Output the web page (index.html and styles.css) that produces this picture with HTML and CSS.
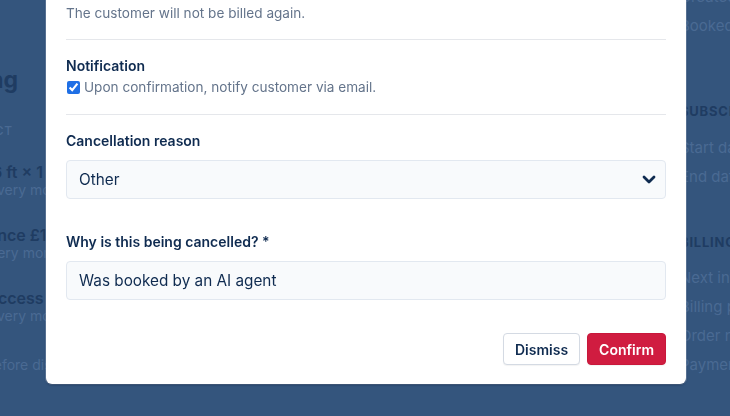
FILE: index.html
```html
<!DOCTYPE html>
<html lang="en">

<head>
    <meta charset="UTF-8">
    <meta name="viewport" content="width=device-width, initial-scale=1.0">
    <title>Cancel subscription</title>
    <link rel="stylesheet" href="styles.css">
</head>

<body>
    <!-- Page behind the dialog -->
    <div class="page">
        <aside class="summary">
            <h1>Billing</h1>
            <div class="eyebrow">Product</div>
            <div class="line-item first">
                <div class="item-name">Desk 6 ft × 1</div>
                <div class="item-sub">Billed every month</div>
            </div>
            <div class="line-item">
                <div class="item-name">Insurance £1,000</div>
                <div class="item-sub">Paid every month</div>
            </div>
            <div class="line-item">
                <div class="item-name">24/7 access</div>
                <div class="item-sub">Billed every month</div>
            </div>
            <div class="note">Total before discounts</div>
        </aside>

        <main class="details"></main>

        <aside class="info">
            <div class="info-row top">Created</div>
            <div class="info-row">Booked by</div>
            <div class="eyebrow section">Subscription</div>
            <div class="info-row gap">Start date</div>
            <div class="info-row">End date</div>
            <div class="eyebrow section billing">Billing</div>
            <div class="info-row gap">Next invoice</div>
            <div class="info-row">Billing period</div>
            <div class="info-row">Order number</div>
            <div class="info-row">Payment method</div>
        </aside>
    </div>

    <!-- Cancel dialog -->
    <div class="overlay">
        <div class="modal">
            <h2 class="modal-title">Cancel subscription</h2>
            <p class="muted">The customer will not be billed again.</p>

            <hr class="divider">

            <div class="form-group">
                <div class="label">Notification</div>
                <label class="check">
                    <input type="checkbox" checked>
                    <span>Upon confirmation, notify customer via email.</span>
                </label>
            </div>

            <hr class="divider after-check">

            <div class="form-group">
                <label class="label" for="reason">Cancellation reason</label>
                <div class="select-wrap">
                    <select id="reason">
                        <option>Too expensive</option>
                        <option>Moving out</option>
                        <option selected>Other</option>
                    </select>
                    <svg class="chevron" width="14" height="9" viewBox="0 0 14 9">
                        <path d="M2 2l5 5 5-5" fill="none" stroke="#0f2b50" stroke-width="2.8" stroke-linecap="round" stroke-linejoin="round" />
                    </svg>
                </div>
            </div>

            <div class="form-group spaced">
                <label class="label" for="why">Why is this being cancelled? *</label>
                <input id="why" type="text" value="Was booked by an AI agent">
            </div>

            <div class="actions">
                <button class="btn">Dismiss</button>
                <button class="btn btn-danger">Confirm</button>
            </div>
        </div>
    </div>
</body>

</html>
```

FILE: styles.css
```css
body {
    font-family: Inter, "Noto Sans", sans-serif;
    background-color: #34557d;
    margin: 0;
    padding: 0;
    overflow: hidden;
    height: 416px;
}

/* ---- background page (dimmed) ---- */

.page {
    display: flex;
    width: 940px;
    height: 416px;
}

.summary {
    width: 200px;
    margin-left: -51px;
    padding-top: 66px;
    flex-shrink: 0;
    white-space: nowrap;
}

.summary h1 {
    margin: 0;
    font-size: 23px;
    line-height: 28px;
    font-weight: 700;
    color: #1f3c62;
}

.eyebrow {
    font-size: 12px;
    line-height: 16px;
    font-weight: 600;
    letter-spacing: 0.06em;
    text-transform: uppercase;
    color: #2a4a72;
}

.summary .eyebrow {
    margin-top: 29px;
    font-weight: 500;
    color: #4a6a93;
}

.line-item {
    margin-top: 27px;
}

.line-item.first {
    margin-top: 23px;
}

.item-name {
    font-size: 16px;
    line-height: 20px;
    font-weight: 600;
    color: #1f3c62;
}

.item-sub,
.note {
    font-size: 14px;
    line-height: 16px;
    color: #4a6a93;
}

.note {
    margin-top: 33px;
}

.details {
    flex: 1;
}

.info {
    width: 260px;
    flex-shrink: 0;
    padding-left: 2px;
    white-space: nowrap;
}

.info-row {
    font-size: 15px;
    line-height: 29px;
    color: #4a6a93;
}

.info-row.top {
    margin-top: -18px;
}

.info .section {
    margin-top: 63px;
    font-weight: 700;
    font-size: 13px;
    color: #1f3c62;
}

.info .section.billing {
    margin-top: 43px;
}

.info-row.gap {
    margin-top: 14px;
}

.billing + .info-row.gap {
    margin-top: 13px;
}

/* ---- dialog ---- */

.overlay {
    position: fixed;
    inset: 0;
    display: flex;
    justify-content: center;
    align-items: flex-end;
    padding: 0 0 32px 2px;
}

.modal {
    width: 600px;
    padding: 20px 20px 19px;
    background-color: #fff;
    border-radius: 6px;
    box-shadow: 0 1px 2px rgba(10, 30, 60, 0.6), 0 0 0 1px rgba(220, 230, 245, 0.3);
}

.modal-title {
    margin: 0 0 8px;
    font-size: 18px;
    color: #0f2b50;
}

.muted {
    margin: 0;
    font-size: 13.6px;
    line-height: 20px;
    color: #64748b;
}

.divider {
    margin: 16px 0;
    border: none;
    border-top: 1px solid #e5e7eb;
}

.divider.after-check {
    margin-top: 17px;
}

.form-group {
    margin: 0;
}

.form-group.spaced {
    margin-top: 33px;
}

.label {
    display: block;
    font-size: 14px;
    line-height: 20px;
    font-weight: 600;
    color: #0f2b50;
}

.check {
    display: flex;
    align-items: center;
    margin-top: 1px;
    font-size: 13.6px;
    line-height: 20px;
    color: #64748b;
}

.check input {
    width: 13px;
    height: 13px;
    margin: 0 4px 0 1px;
    accent-color: #1f6fe5;
}

.select-wrap {
    position: relative;
    margin-top: 9px;
}

select,
input[type="text"] {
    display: block;
    box-sizing: border-box;
    width: 100%;
    height: 39px;
    padding: 0 12px;
    font-family: inherit;
    font-size: 15.3px;
    color: #0f2b50;
    background-color: #f8fafc;
    border: 1px solid #e2e8f0;
    border-radius: 4px;
    appearance: none;
    outline: none;
}

input[type="text"] {
    margin-top: 9px;
}

.chevron {
    position: absolute;
    right: 10px;
    top: 15px;
    pointer-events: none;
}

.actions {
    display: flex;
    justify-content: flex-end;
    gap: 7px;
    margin-top: 33px;
}

.btn {
    height: 32px;
    padding: 0 11px;
    font-family: inherit;
    font-size: 14px;
    font-weight: 600;
    color: #0f2b50;
    background-color: #fff;
    border: 1px solid #d4dae3;
    border-radius: 4px;
    box-shadow: 0 1px 1px rgba(0, 0, 0, 0.05);
    cursor: pointer;
}

.btn-danger {
    color: #fff;
    background-color: #d01c40;
    border-color: #c8183b;
}
```
